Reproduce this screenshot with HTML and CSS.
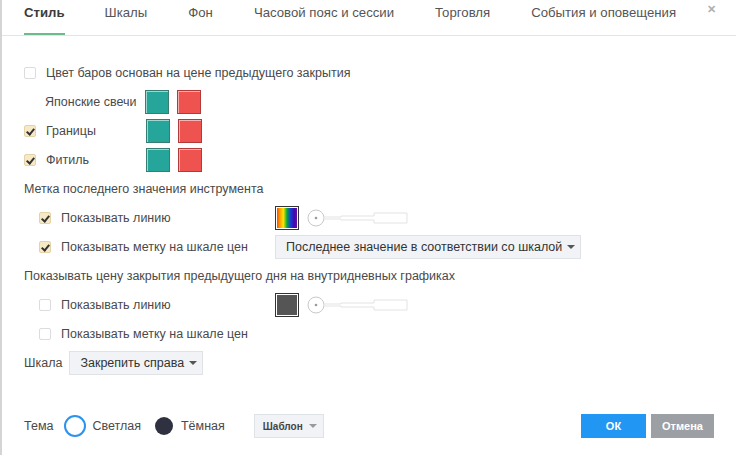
FILE: index.html
```html
<!DOCTYPE html>
<html lang="ru">

<head>
    <meta charset="UTF-8">
    <title>Свойства</title>
    <link rel="stylesheet" href="styles.css">
</head>

<body>
    <div class="dialog">
        <div class="tabs">
            <span class="tab active">Стиль</span>
            <span class="tab">Шкалы</span>
            <span class="tab">Фон</span>
            <span class="tab">Часовой пояс и сессии</span>
            <span class="tab">Торговля</span>
            <span class="tab">События и оповещения</span>
            <span class="close">&#x2715;</span>
        </div>

        <div class="content">
            <div class="row">
                <span class="check"></span>
                <span>Цвет баров основан на цене предыдущего закрытия</span>
            </div>
            <div class="row sub">
                <span class="label">Японские свечи</span>
                <span class="swatch up"></span>
                <span class="swatch down"></span>
            </div>
            <div class="row">
                <span class="check on"></span>
                <span class="label">Границы</span>
                <span class="swatch up"></span>
                <span class="swatch down"></span>
            </div>
            <div class="row">
                <span class="check on"></span>
                <span class="label">Фитиль</span>
                <span class="swatch up"></span>
                <span class="swatch down"></span>
            </div>

            <div class="row">Метка последнего значения инструмента</div>
            <div class="row indent">
                <span class="check on"></span>
                <span class="label wide">Показывать линию</span>
                <span class="swatch rainbow"></span>
                <svg class="slider" width="102" height="18" viewBox="0 0 102 18">
                    <circle cx="9" cy="9" r="8" fill="#fff" stroke="#c9c9c9"/>
                    <circle cx="9" cy="9" r="1.3" fill="#9a9a9a"/>
                    <path d="M17 8 H34 V7 H67 V4 H100 V14 H67 V11 H34 V10 H17 Z" fill="#fff" stroke="#e3e3e3"/>
                </svg>
            </div>
            <div class="row indent">
                <span class="check on"></span>
                <span class="label wide">Показывать метку на шкале цен</span>
                <span class="select">Последнее значение в соответствии со шкалой <i class="caret"></i></span>
            </div>

            <div class="row">Показывать цену закрытия предыдущего дня на внутридневных графиках</div>
            <div class="row indent">
                <span class="check"></span>
                <span class="label wide">Показывать линию</span>
                <span class="swatch grey"></span>
                <svg class="slider" width="102" height="18" viewBox="0 0 102 18">
                    <circle cx="9" cy="9" r="8" fill="#fff" stroke="#c9c9c9"/>
                    <circle cx="9" cy="9" r="1.3" fill="#9a9a9a"/>
                    <path d="M17 8 H34 V7 H67 V4 H100 V14 H67 V11 H34 V10 H17 Z" fill="#fff" stroke="#e3e3e3"/>
                </svg>
            </div>
            <div class="row indent">
                <span class="check"></span>
                <span>Показывать метку на шкале цен</span>
            </div>

            <div class="row">
                <span class="scale-label">Шкала</span>
                <span class="select">Закрепить справа <i class="caret"></i></span>
            </div>
        </div>

        <div class="footer">
            <span class="theme-label">Тема</span>
            <span class="radio light"></span>
            <span class="theme-name">Светлая</span>
            <span class="radio dark"></span>
            <span class="theme-name">Тёмная</span>
            <span class="template">Шаблон <i class="caret"></i></span>
            <span class="spacer"></span>
            <button class="btn ok">ОК</button>
            <button class="btn cancel">Отмена</button>
        </div>
    </div>
</body>

</html>
```

FILE: styles.css
```css
body {
    margin: 0;
    font-family: "Liberation Sans", Arial, sans-serif;
    font-size: 12.5px;
    color: #4a4a4a;
    background: #fff;
}

.dialog {
    width: 734px;
    height: 455px;
    border-left: 2px solid #d4d4d4;
    position: relative;
}

.tabs {
    display: flex;
    height: 35px;
    padding-left: 22px;
    border-bottom: 1px solid #e2e4e8;
    position: relative;
    white-space: nowrap;
}

.tab {
    padding-top: 5px;
    margin-right: 41px;
    color: #555;
    font-size: 13.2px;
    box-sizing: border-box;
}

.tab.active {
    font-weight: bold;
    color: #3c3c3c;
    border-bottom: 2px solid #6cbb8c;
    margin-right: 40px;
}

.close {
    position: absolute;
    right: 20px;
    top: 3px;
    font-size: 11px;
    font-weight: bold;
    color: #b0b0b0;
}

.content {
    padding: 22px 0 0 22px;
}

.row {
    display: flex;
    align-items: center;
    height: 29px;
    white-space: nowrap;
}

.row.sub {
    padding-left: 21px;
}

.row.indent {
    padding-left: 15px;
}

.check {
    width: 10px;
    height: 10px;
    border: 1px solid #dcdcdc;
    border-radius: 2px;
    margin-right: 10px;
    position: relative;
}

.check.on {
    background: #f7e8c6;
    border-color: #e3d3a8;
}

.check.on::after {
    content: "";
    position: absolute;
    left: 3px;
    top: 1px;
    width: 3px;
    height: 6px;
    border: solid #333;
    border-width: 0 2px 2px 0;
    transform: rotate(40deg);
}

.label {
    width: 100px;
}

.label.wide {
    width: 214px;
}

.swatch {
    width: 22px;
    height: 22px;
    border: 1px solid;
    margin-right: 8px;
    box-shadow: inset 1px 1px 0 rgba(255, 255, 255, 0.55);
}

.swatch.up {
    background: #26a69a;
    border-color: #3a7b72;
}

.swatch.down {
    background: #ef5350;
    border-color: #b23b39;
}

.swatch.rainbow {
    border-color: #333;
    box-shadow: inset 0 0 0 1px #fff;
    background: linear-gradient(to right, #ff2a00, #ff9900, #ffe600, #00a843, #1a38d6, #3f0aa8, #7a0bb0);
}

.swatch.grey {
    border-color: #333;
    box-shadow: inset 0 0 0 1px #fff;
    background: #555;
}

.select {
    display: flex;
    align-items: center;
    height: 22px;
    padding: 0 5px 0 10px;
    background: #f1f3f6;
    border: 1px solid #dfe2e6;
    color: #333;
}

.caret {
    width: 0;
    height: 0;
    border-left: 4px solid transparent;
    border-right: 4px solid transparent;
    border-top: 4px solid #555;
    margin-left: 5px;
}

.scale-label {
    margin-right: 7px;
}

.footer {
    position: absolute;
    left: 22px;
    right: 22px;
    top: 414px;
    display: flex;
    align-items: center;
    height: 24px;
}

.theme-label {
    margin-right: 11px;
}

.radio {
    border-radius: 50%;
    box-sizing: border-box;
}

.radio.light {
    width: 22px;
    height: 22px;
    border: 2px solid #2b93ee;
    margin-right: 6px;
}

.radio.dark {
    width: 18px;
    height: 18px;
    background: #2f3141;
    margin-left: 14px;
    margin-right: 8px;
}

.template {
    display: flex;
    align-items: center;
    height: 22px;
    margin-left: 29px;
    padding: 0 6px 0 8px;
    background: #f1f3f6;
    border: 1px solid #dfe2e6;
    font-size: 10px;
    font-weight: bold;
    color: #444;
}

.template .caret {
    border-top-color: #999;
    margin-left: 6px;
}

.spacer {
    flex: 1;
}

.btn {
    height: 24px;
    border: none;
    color: #fff;
    font-family: "Liberation Sans", Arial, sans-serif;
    font-size: 11px;
    font-weight: bold;
}

.btn.ok {
    width: 65px;
    background: #2196f3;
    margin-right: 5px;
}

.btn.cancel {
    width: 63px;
    background: #9c9fa4;
}
```
